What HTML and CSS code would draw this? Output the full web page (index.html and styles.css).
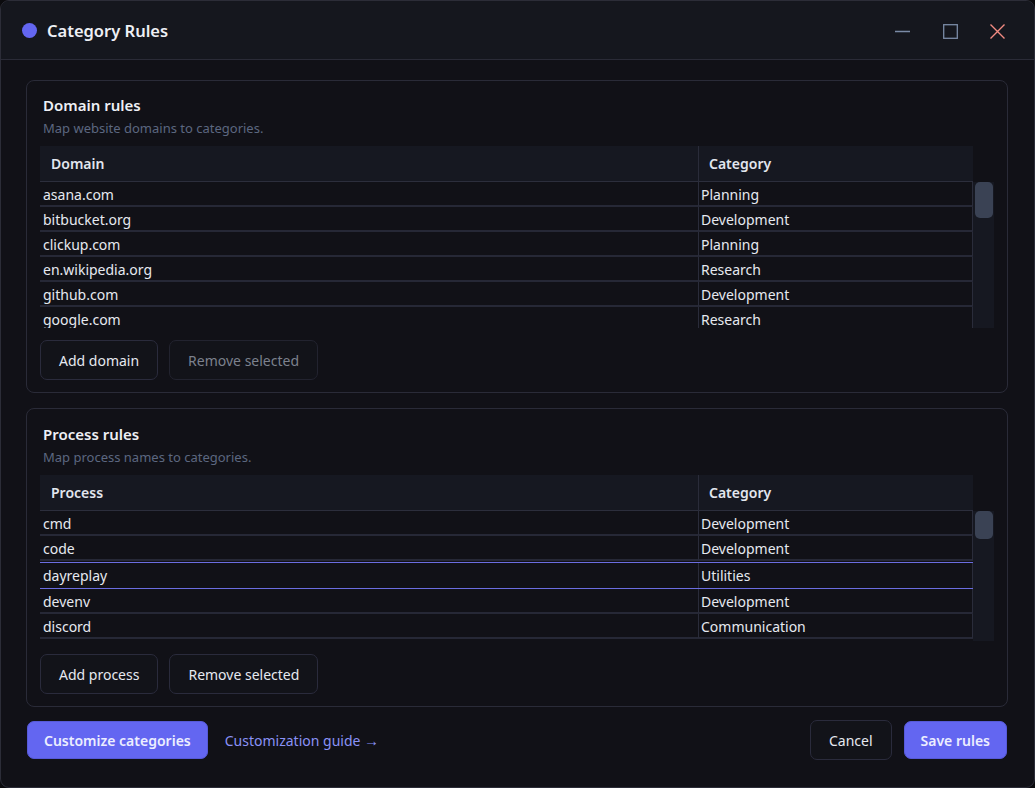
FILE: index.html
```html
<!DOCTYPE html>
<html lang="en">
  <head>
    <meta charset="UTF-8" />
    <meta name="viewport" content="width=device-width, initial-scale=1.0" />
    <title>Category Rules</title>
    <link rel="stylesheet" href="styles.css">
  </head>
  <body>
    <div class="window">
      <header class="titlebar">
        <span class="dot"></span>
        <h1 class="title">Category Rules</h1>
        <div class="controls">
          <span class="ctrl">
            <svg width="15" height="15" viewBox="0 0 15 15"><path d="M0 7.5h15" stroke="#7a8aa6" stroke-width="1.3"/></svg>
          </span>
          <span class="ctrl">
            <svg width="15" height="15" viewBox="0 0 15 15"><rect x="0.7" y="0.7" width="13.6" height="13.6" fill="none" stroke="#7a8aa6" stroke-width="1.3"/></svg>
          </span>
          <span class="ctrl">
            <svg width="15" height="15" viewBox="0 0 15 15"><path d="M0.5 0.5l14 14M14.5 0.5l-14 14" stroke="#f28b82" stroke-width="1.4"/></svg>
          </span>
        </div>
      </header>

      <main class="content">
        <section class="card">
          <h2 class="card-title">Domain rules</h2>
          <p class="hint">Map website domains to categories.</p>
          <div class="table-wrap domains">
            <div class="table">
              <div class="row head">
                <div class="cell">Domain</div>
                <div class="cell cat">Category</div>
              </div>
              <div class="body">
                <div class="row"><div class="cell">asana.com</div><div class="cell cat">Planning</div></div>
                <div class="row"><div class="cell">bitbucket.org</div><div class="cell cat">Development</div></div>
                <div class="row"><div class="cell">clickup.com</div><div class="cell cat">Planning</div></div>
                <div class="row"><div class="cell">en.wikipedia.org</div><div class="cell cat">Research</div></div>
                <div class="row"><div class="cell">github.com</div><div class="cell cat">Development</div></div>
                <div class="row"><div class="cell">google.com</div><div class="cell cat">Research</div></div>
              </div>
            </div>
            <div class="scrollbar"><div class="thumb"></div></div>
          </div>
          <div class="actions">
            <button class="btn">Add domain</button>
            <button class="btn" disabled>Remove selected</button>
          </div>
        </section>

        <section class="card">
          <h2 class="card-title">Process rules</h2>
          <p class="hint">Map process names to categories.</p>
          <div class="table-wrap processes">
            <div class="table">
              <div class="row head">
                <div class="cell">Process</div>
                <div class="cell cat">Category</div>
              </div>
              <div class="body">
                <div class="row"><div class="cell">cmd</div><div class="cell cat">Development</div></div>
                <div class="row"><div class="cell">code</div><div class="cell cat">Development</div></div>
                <div class="row selected"><div class="cell">dayreplay</div><div class="cell cat">Utilities</div></div>
                <div class="row"><div class="cell">devenv</div><div class="cell cat">Development</div></div>
                <div class="row"><div class="cell">discord</div><div class="cell cat">Communication</div></div>
              </div>
            </div>
            <div class="scrollbar"><div class="thumb"></div></div>
          </div>
          <div class="actions">
            <button class="btn">Add process</button>
            <button class="btn">Remove selected</button>
          </div>
        </section>
      </main>

      <footer class="footer">
        <button class="btn primary">Customize categories</button>
        <a class="guide" href="#">Customization guide <span class="arrow">&rarr;</span></a>
        <span class="spacer"></span>
        <button class="btn">Cancel</button>
        <button class="btn primary">Save rules</button>
      </footer>
    </div>
  </body>
</html>
```

FILE: styles.css
```css
* {
  box-sizing: border-box;
}
html,
body {
  margin: 0;
  padding: 0;
  background-color: #0b0b0e;
}
body {
  font-family: "Noto Sans", "Open Sans", sans-serif;
  font-size: 14px;
  color: #e6e9f0;
}
.window {
  width: 1035px;
  height: 788px;
  background-color: #111117;
  border: 1px solid #2c2d38;
  border-radius: 9px;
  overflow: hidden;
  display: flex;
  flex-direction: column;
}
.titlebar {
  height: 59px;
  flex: none;
  display: flex;
  align-items: center;
  padding: 0 29px 0 21px;
  background-color: #15171e;
  border-bottom: 1px solid #2a2b37;
}
.dot {
  width: 15px;
  height: 15px;
  border-radius: 50%;
  background-color: #6366f1;
  margin-right: 10px;
  margin-top: 1px;
}
.title {
  margin: 0;
  font-size: 16.5px;
  font-weight: 600;
  color: #eef0f5;
}
.controls {
  margin-left: auto;
  display: flex;
  gap: 32.5px;
  padding-top: 2px;
}
.ctrl {
  display: flex;
}
.content {
  padding: 20px 26px 0 25px;
  display: flex;
  flex-direction: column;
  gap: 15px;
}
.card {
  border: 1px solid #2a2b38;
  border-radius: 8px;
  padding: 13px 13px 12px 13px;
}
.card + .card {
  padding-top: 14px;
}
.card-title {
  margin: 0 0 0 3px;
  font-size: 15px;
  font-weight: 600;
  line-height: 22px;
  color: #eef0f5;
}
.hint {
  margin: 3px 0 9px 3px;
  font-size: 13px;
  line-height: 18px;
  color: #5c6780;
}
.table-wrap {
  display: flex;
  align-items: flex-start;
}
.table {
  width: 933px;
}
.row {
  display: grid;
  grid-template-columns: 658px 275px;
  height: 25px;
  border-bottom: 2px solid #262836;
}
.cell {
  padding-left: 3px;
  padding-top: 1px;
  line-height: 23px;
  white-space: nowrap;
}
.cell.cat {
  border-left: 1px solid #2a2c3a;
  border-right: 1px solid #2a2c3a;
  padding-left: 2px;
}
.row.head {
  height: 36px;
  background-color: #161821;
  border-bottom: 1px solid #2c2e3c;
}
.row.head .cell {
  padding: 0 0 0 11px;
  line-height: 36px;
  font-weight: 600;
  color: #e2e6ee;
}
.row.head .cell.cat {
  padding-left: 10px;
  border-right: none;
}
.row.selected {
  height: 27px;
  border-top: 1px solid #6b6de0;
  border-bottom: 1px solid #6b6de0;
  margin-top: 1px;
}
.row.selected .cell {
  line-height: 24px;
}
.body {
  overflow: hidden;
}
.domains .body,
.domains .scrollbar {
  height: 146px;
}
.processes .body,
.processes .scrollbar {
  height: 130px;
}
.scrollbar {
  width: 22px;
  margin-top: 36px;
  background-color: #161821;
  padding: 0 1px 0 2px;
}
.thumb {
  height: 36px;
  border-radius: 5px;
  background-color: #3a4254;
}
.processes .thumb {
  height: 28px;
}
.actions {
  display: flex;
  gap: 11px;
  margin-top: 13px;
}
.domains + .actions {
  margin-top: 12px;
}
.btn {
  font-family: inherit;
  font-size: 14px;
  color: #e6e9f0;
  background-color: #121319;
  border: 1px solid #2a2b3c;
  border-radius: 7px;
  height: 40px;
  padding: 0 18px;
  cursor: pointer;
}
.btn:disabled {
  color: #7c818d;
  border-color: #22232f;
}
.actions .btn {
  min-width: 118px;
}
.footer {
  display: flex;
  align-items: center;
  padding: 13px 27px 0 26px;
}
.btn.primary {
  background-color: #6366f1;
  border-color: #575ad8;
  color: #eceeff;
  font-weight: 600;
  height: 38px;
  padding: 0 16px;
}
.guide {
  margin-left: 17px;
  color: #8a92f6;
  text-decoration: none;
}
.arrow {
  font-size: 15px;
}
.spacer {
  flex: 1;
}
.footer .btn + .btn {
  margin-left: 12px;
}
```
